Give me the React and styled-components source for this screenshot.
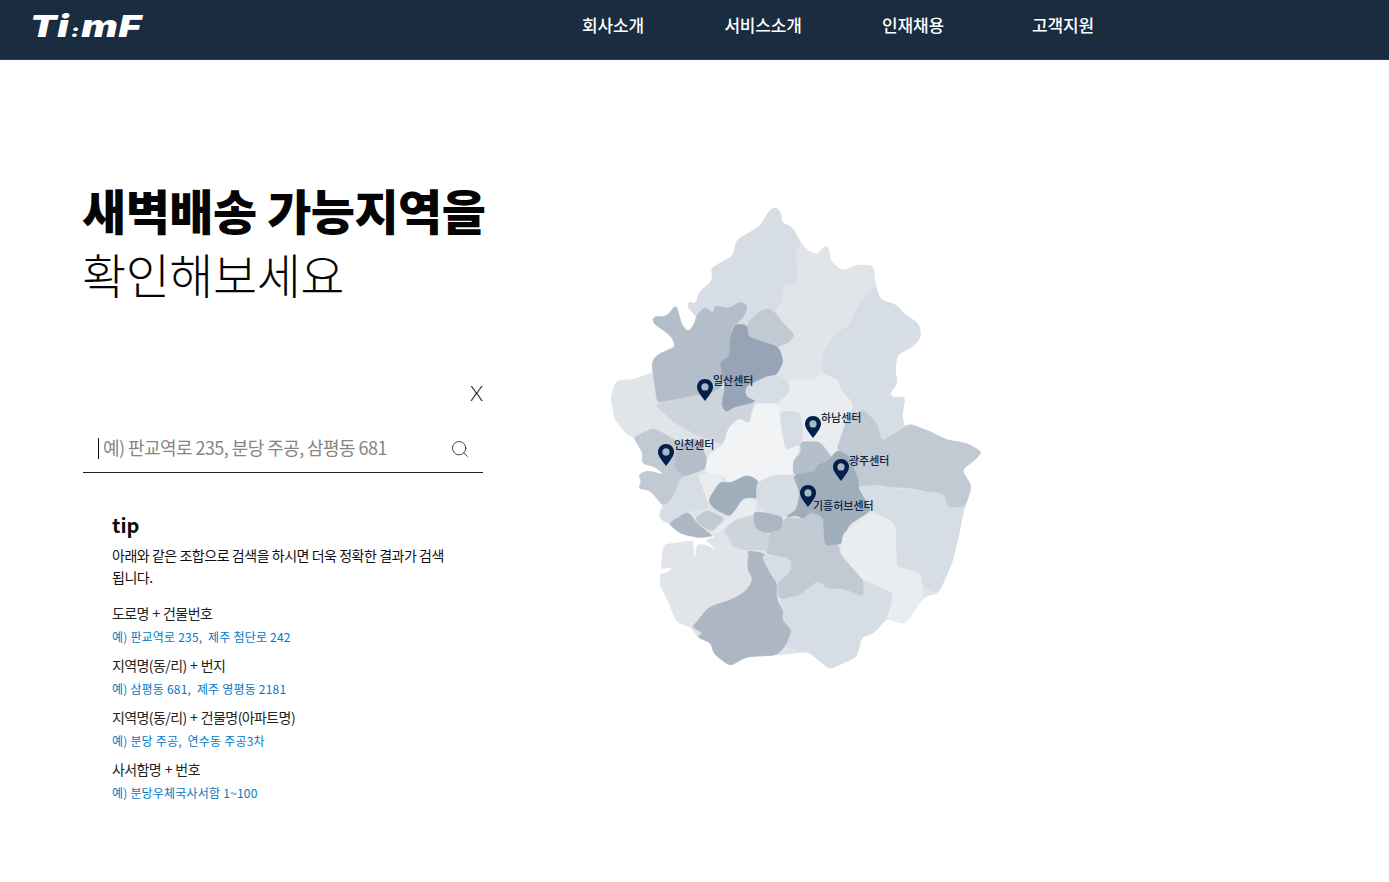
import React from 'react';
import styled, { createGlobalStyle } from 'styled-components';
import { Search } from 'lucide-react';

const FONT = '"Noto Sans CJK KR", "Noto Sans", sans-serif';

const GlobalStyle = createGlobalStyle`
  html, body {
    margin: 0;
    padding: 0;
    background: #fff;
    font-family: ${FONT};
    color: #111;
  }
`;

const Page = styled.div`
  width: 1389px;
  height: 882px;
  overflow: hidden;
`;

const Header = styled.header`
  height: 60px;
  box-sizing: border-box;
  background: #1a2c3f;
  border-bottom: 1px solid #2b3d4f;
  display: flex;
`;

const Logo = styled.div`
  width: 538px;
  padding: 8px 0 0 30px;
  box-sizing: border-box;
  color: #fff;
  font-family: Inter, "Liberation Sans", sans-serif;
  font-size: 30px;
  line-height: 36px;
  font-weight: 900;
  font-style: italic;
  letter-spacing: 0.5px;
  white-space: nowrap;
`;

const LogoWide = styled.span`
  display: inline-block;
  transform: scaleX(1.29);
  transform-origin: left center;
`;

const LogoDots = styled.span`
  font-size: 18px;
  margin: 0 1px;
`;

const Nav = styled.nav`
  display: flex;
  height: 48px;
  align-items: center;
`;

const NavItem = styled.a`
  width: 150px;
  text-align: center;
  color: #fff;
  font-size: 17px;
  font-weight: 500;
  letter-spacing: -0.2px;
`;

const Main = styled.main`
  display: flex;
  padding-left: 83px;
`;

const LeftColumn = styled.section`
  width: 400px;
  padding-top: 117px;
`;

const Title = styled.h1`
  margin: 0 0 0 -1px;
  font-size: 48px;
  line-height: 64px;
  letter-spacing: -0.5px;
  font-weight: ${(p) => (p.$light ? 300 : 800)};
  color: #050505;
  white-space: nowrap;
`;

const CloseRow = styled.div`
  display: flex;
  justify-content: flex-end;
  margin-top: 75px;
`;

const CloseText = styled.span`
  font-family: Lato, "Noto Sans", sans-serif;
  font-size: 21px;
  line-height: 26px;
  font-weight: 300;
`;

const SearchBar = styled.div`
  display: flex;
  align-items: center;
  height: 40px;
  margin-top: 20px;
  padding: 0 13px 6px 15px;
  border-bottom: 1px solid #222;
`;

const Caret = styled.span`
  width: 1px;
  height: 21px;
  margin-top: 4px;
  background: #111;
  margin-right: 4px;
`;

const Placeholder = styled.span`
  flex: 1;
  margin-top: 2px;
  color: #858585;
  font-size: 18px;
  line-height: 24px;
  letter-spacing: -0.56px;
  white-space: nowrap;
`;

const SearchIcon = styled(Search)`
  margin-top: 6px;
`;

const TipBox = styled.div`
  padding: 37px 36px 0 29px;
`;

const TipTitle = styled.h2`
  margin: 0 0 4px;
  font-size: 20px;
  line-height: 30px;
  font-weight: 700;
  color: #0b0b0b;
`;

const TipText = styled.p`
  margin: 0 0 13px;
  font-size: 14px;
  line-height: 22px;
  letter-spacing: -0.46px;
  word-break: keep-all;
`;

const TipRow = styled.div`
  margin-bottom: 5px;
`;

const RowTitle = styled.div`
  font-size: 14px;
  line-height: 24px;
  color: #222;
  letter-spacing: -0.6px;
  word-spacing: 1px;
`;

const RowExample = styled.div`
  margin-top: 1px;
  font-size: 12px;
  line-height: 22px;
  color: #0079c4;
  letter-spacing: 0.2px;
  white-space: pre;
`;

const MapArea = styled.section`
  position: relative;
  width: 400px;
  height: 480px;
  margin: 140px 0 0 117px;
`;

const MapSvg = styled.svg`
  display: block;
  width: 400px;
  height: 480px;
`;

const Pin = styled.div`
  position: absolute;
  width: 17px;
  height: 23px;
  transform: translate(-50%, -50%);
  left: ${(p) => p.$x}px;
  top: ${(p) => p.$y}px;
`;

const PinLabel = styled.span`
  position: absolute;
  left: ${(p) => p.$x}px;
  top: ${(p) => p.$y}px;
  transform: translateY(-50%);
  font-size: 11px;
  line-height: 14px;
  font-weight: 500;
  letter-spacing: 0;
  color: #0d2440;
  white-space: nowrap;
`;

// traced outline with only its corners softened
const smooth = (pts) => {
  const towards = (a, b, len) => {
    const d = Math.hypot(b[0] - a[0], b[1] - a[1]);
    const t = Math.min(len / d, 0.4);
    return [a[0] + (b[0] - a[0]) * t, a[1] + (b[1] - a[1]) * t];
  };
  const n = pts.length;
  let d = '';
  pts.forEach((p, i) => {
    const a = towards(p, pts[(i - 1 + n) % n], 14);
    const b = towards(p, pts[(i + 1) % n], 14);
    d += `${i ? 'L' : 'M'}${a[0]} ${a[1]}Q${p[0]} ${p[1]} ${b[0]} ${b[1]}`;
  });
  return `${d}Z`;
};

// south part was traced with a 690 unit offset
const S = (pts) => pts.map(([x, y]) => [x, y + 690]);

// whole province outline, sits under the districts so no gaps show between them
const OUTLINE = [[510,30],[528,22],[543,40],[545,70],[575,80],[603,130],[625,155],[655,165],[670,140],[685,140],[690,180],[725,215],[770,195],[820,197],[826,255],[840,300],[890,315],[915,345],[955,370],[964,405],[945,435],[890,465],[885,515],[893,550],[868,580],[880,595],[915,590],[905,650],[915,680],[930,672],[990,695],[1040,720],[1100,730],[1145,755],[1130,775],[1085,810],[1115,860],[1095,920],[1075,1010],[1055,1090],[1015,1180],[972,1190],[915,1272],[860,1255],[820,1300],[785,1310],[770,1370],[690,1407],[625,1355],[530,1365],[440,1370],[390,1398],[340,1360],[335,1330],[290,1310],[275,1282],[230,1265],[195,1180],[180,1155],[190,1035],[275,1023],[340,1015],[290,1012],[240,1000],[205,970],[175,945],[190,918],[150,870],[115,865],[125,845],[115,825],[140,812],[195,825],[165,800],[125,790],[130,760],[100,712],[45,660],[33,590],[50,542],[100,540],[165,515],[155,490],[170,465],[228,440],[215,410],[190,390],[160,370],[160,350],[200,350],[228,314],[245,375],[265,397],[285,370],[290,345],[265,325],[265,306],[290,312],[295,280],[340,240],[333,205],[400,168],[410,120],[480,80]];

const REGIONS = [
  ['#dfe4e9', OUTLINE],
  ['#d6dde4', [[265,306],[290,312],[295,280],[340,240],[333,205],[400,168],[410,120],[480,80],[510,30],[528,22],[543,40],[545,70],[575,80],[603,130],[620,300],[525,380],[400,400],[300,360],[265,325]]],
  ['#e1e5ea', [[603,130],[625,155],[655,165],[670,140],[685,140],[690,180],[725,215],[770,195],[820,197],[826,260],[780,310],[745,380],[705,400],[668,465],[670,520],[635,545],[565,545],[520,525],[530,440],[570,405],[525,328],[552,300],[545,262],[597,245],[586,160]]],
  ['#d6dde4', [[826,255],[840,300],[890,315],[915,345],[955,370],[964,405],[945,435],[890,465],[885,515],[893,550],[868,580],[880,595],[915,590],[905,650],[915,690],[840,760],[740,720],[715,540],[668,520],[668,465],[705,400],[745,380],[780,310]]],
  ['#e9edf0', [[525,600],[565,540],[635,542],[670,522],[715,540],[722,570],[760,612],[728,690],[708,790],[650,725],[590,725],[560,740],[530,650]]],
  ['#e1e5ea', [[165,515],[130,530],[100,540],[50,542],[33,590],[45,660],[90,712],[140,690],[200,700],[260,690],[300,600],[200,570]]],
  ['#cdd4dc', [[165,615],[250,592],[340,575],[370,560],[365,615],[380,635],[465,605],[450,670],[415,655],[385,685],[375,735],[290,705],[220,665]]],
  ['#b4bdca', [[160,370],[160,350],[200,350],[228,314],[245,375],[265,397],[285,370],[290,345],[315,320],[340,342],[345,316],[385,326],[420,305],[442,315],[435,345],[410,372],[395,380],[390,480],[365,560],[340,575],[250,592],[172,608],[155,490],[170,465],[228,440],[215,410],[190,390]]],
  ['#c1c9d3', [[490,328],[515,328],[555,375],[584,405],[570,425],[530,442],[480,425],[442,408],[440,375],[460,350]]],
  ['#97a4b5', [[403,373],[442,375],[443,410],[537,442],[550,485],[530,525],[500,532],[468,605],[400,622],[378,637],[365,615],[375,560],[360,485],[390,470],[390,420]]],
  ['#d6dde4', [[500,530],[530,525],[567,545],[567,580],[520,618],[490,618],[465,600],[438,590],[437,560]]],
  ['#d6dde4', [[540,635],[600,635],[610,700],[600,735],[555,752]]],
  ['#f1f3f5', [[455,640],[465,612],[530,610],[540,670],[555,752],[600,735],[580,785],[590,815],[570,825],[530,830],[505,850],[475,840],[440,825],[390,850],[362,820],[315,820],[325,765],[370,735],[385,685],[415,655],[450,672]]],
  ['#c1c9d3', [[100,712],[160,685],[200,705],[240,730],[300,770],[320,805],[250,830],[222,890],[190,918],[150,870],[115,865],[125,845],[115,825],[140,812],[195,825],[165,800],[125,790],[130,760]]],
  ['#b4bdca', [[240,730],[290,715],[320,770],[316,805],[255,830],[225,805],[225,770]]],
  ['#d6dde4', [[245,830],[295,825],[330,920],[265,935],[195,970],[175,945],[220,890]]],
  ['#e9edf0', [[295,825],[362,820],[366,840],[325,910]]],
  ['#a0aebc', [[360,845],[390,850],[440,825],[475,840],[468,900],[430,905],[390,950],[340,925],[325,900]]],
  ['#acb7c3', [[205,970],[265,935],[290,970],[342,1012],[290,1012],[240,1000]]],
  ['#c1c9d3', [[285,955],[320,930],[375,955],[335,995],[300,975]]],
  ['#e9edf0', [[335,1000],[400,940],[430,895],[470,895],[465,945],[410,960],[350,1002]]],
  ['#cdd4dc', [[370,990],[405,960],[460,945],[465,985],[505,1000],[512,1050],[400,1050],[395,1025]]],
  ['#d6dde4', [[470,850],[520,825],[590,825],[602,880],[590,930],[550,952],[505,940],[470,910]]],
  ['#acb7c3', [[460,935],[505,940],[550,952],[545,990],[500,1000],[465,985]]],
  ['#c1c9d3', [[505,1000],[545,990],[555,952],[610,958],[630,935],[670,940],[680,1035],[715,1032],[720,1060],[790,1140],[794,1190],[720,1165],[685,1170],[655,1142],[600,1185],[540,1200],[530,1155],[570,1110],[570,1075],[495,1060],[510,1040]]],
  ['#c1c9d3', [[740,660],[790,628],[830,670],[845,725],[930,672],[990,695],[1040,720],[1100,730],[1145,755],[1130,775],[1085,810],[1115,860],[1095,920],[1040,925],[1030,885],[940,865],[880,860],[840,870],[810,855],[775,862],[745,765],[710,750]]],
  ['#b4bfca', [[600,725],[660,725],[705,785],[650,795],[645,815],[580,825],[580,780],[605,760]]],
  ['#a0aebc', [[580,825],[645,815],[650,795],[685,785],[710,750],[745,765],[775,840],[775,865],[815,930],[745,975],[730,1030],[675,1037],[670,950],[630,935],[610,958],[590,945],[555,952],[590,930],[600,880]]],
  ['#d6dde4', S([[775,170],[840,165],[900,180],[1030,190],[1045,235],[1090,230],[1075,320],[1055,400],[1015,490],[970,470],[965,430],[890,410],[885,280],[815,240]])],
  ['#e9edf0', S([[730,310],[815,245],[885,280],[890,410],[960,430],[972,500],[915,582],[860,565],[880,490],[790,450],[720,370]])],
  ['#d6dde4', S([[540,510],[600,495],[655,452],[685,480],[720,475],[792,500],[790,450],[880,490],[860,565],[820,610],[785,620],[770,680],[690,717],[625,665],[555,650],[575,600],[545,570],[550,540]])],
  ['#acb7c3', S([[440,362],[495,370],[500,400],[530,460],[530,510],[550,545],[545,570],[575,600],[555,650],[530,675],[440,680],[390,708],[340,670],[335,640],[290,620],[310,610],[275,590],[325,530],[400,505],[440,480],[458,445],[440,420]])],
  ['#e1e5ea', S([[190,345],[275,333],[282,385],[287,340],[345,368],[352,338],[445,365],[440,420],[458,445],[440,480],[400,505],[325,530],[275,592],[230,575],[195,490],[180,465],[210,425],[190,425]])],
  ['#d6dde4', S([[485,375],[570,385],[574,420],[530,460],[500,410]])],
  // tidal inlets along the west coast
  ['#ffffff', S([[275,330],[350,318],[312,328],[352,362],[322,345],[290,340],[284,384],[281,340]])],
  ['#ffffff', S([[170,420],[218,412],[200,428],[180,430]])],
];

const PINS = [
  { x: 105, y: 190, label: '일산센터', lx: 113, ly: 180 },
  { x: 213, y: 227, label: '하남센터', lx: 221, ly: 217 },
  { x: 66, y: 255, label: '인천센터', lx: 74, ly: 244 },
  { x: 241, y: 270, label: '광주센터', lx: 249, ly: 260 },
  { x: 208, y: 296, label: '기흥허브센터', lx: 213, ly: 305 },
];

const EXAMPLES = [
  ['도로명 + 건물번호', '예) 판교역로 235,  제주 첨단로 242'],
  ['지역명(동/리) + 번지', '예) 삼평동 681,  제주 영평동 2181'],
  ['지역명(동/리) + 건물명(아파트명)', '예) 분당 주공,  연수동 주공3차'],
  ['사서함명 + 번호', '예) 분당우체국사서함 1~100'],
];

const PinIcon = () => (
  <svg width="17" height="23" viewBox="0 0 17 23">
    <path
      fill="#02204a"
      d="M8.5 0.5C4 0.5 0.5 4 0.5 8.4c0 3.6 3.2 7.9 8 14.1 4.8-6.2 8-10.5 8-14.1C16.5 4 13 0.5 8.5 0.5z"
    />
    <circle cx="8.5" cy="8.4" r="3.6" fill="#a9b6c4" />
  </svg>
);

const App = () => (
  <Page>
    <GlobalStyle />
    <Header>
      <Logo><LogoWide>Ti<LogoDots>:</LogoDots>mF</LogoWide></Logo>
      <Nav>
        <NavItem>회사소개</NavItem>
        <NavItem>서비스소개</NavItem>
        <NavItem>인재채용</NavItem>
        <NavItem>고객지원</NavItem>
      </Nav>
    </Header>
    <Main>
      <LeftColumn>
        <Title>새벽배송 가능지역을</Title>
        <Title $light>확인해보세요</Title>
        <CloseRow><CloseText>X</CloseText></CloseRow>
        <SearchBar>
          <Caret />
          <Placeholder>예) 판교역로 235, 분당 주공, 삼평동 681</Placeholder>
          <SearchIcon size={20} strokeWidth={1} color="#222" />
        </SearchBar>
        <TipBox>
          <TipTitle>tip</TipTitle>
          <TipText>아래와 같은 조합으로 검색을 하시면 더욱 정확한 결과가 검색 됩니다.</TipText>
          {EXAMPLES.map(([title, example]) => (
            <TipRow key={title}>
              <RowTitle>{title}</RowTitle>
              <RowExample>{example}</RowExample>
            </TipRow>
          ))}
        </TipBox>
      </LeftColumn>
      <MapArea>
        <MapSvg viewBox="0 0 1200 1440">
          {REGIONS.map(([fill, pts], i) => (
            <path key={i} d={smooth(pts)} fill={fill} stroke={fill} strokeWidth="2" />
          ))}
        </MapSvg>
        {PINS.map((pin) => (
          <React.Fragment key={pin.label}>
            <Pin $x={pin.x} $y={pin.y}><PinIcon /></Pin>
            <PinLabel $x={pin.lx} $y={pin.ly}>{pin.label}</PinLabel>
          </React.Fragment>
        ))}
      </MapArea>
    </Main>
  </Page>
);

export default App;
